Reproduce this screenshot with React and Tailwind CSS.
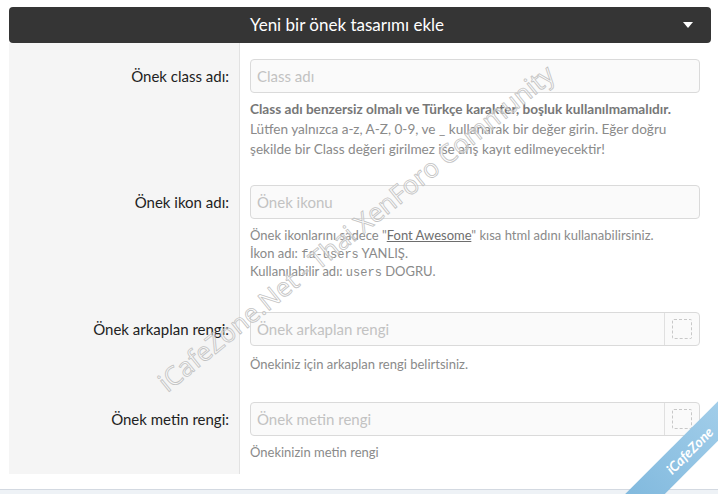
import { useState } from "react";

// ─────────────────────────────────────────────
// Small building blocks
// ─────────────────────────────────────────────
function TextBox({ placeholder, color = false }) {
  return (
    <div className="flex h-[34px] w-full rounded-[4px] border border-[#dadada] bg-[#fafafa] overflow-hidden">
      <input
        type="text"
        placeholder={placeholder}
        className="flex-1 min-w-0 bg-transparent px-[6px] text-[15px] text-[#333] placeholder:text-[#c2c2c2] outline-none font-['Lato',sans-serif]"
      />
      {color && (
        <div className="w-[35px] shrink-0 border-l border-[#e0e0e0] flex items-center justify-center">
          <span className="block w-[20px] h-[20px] rounded-[2px] border border-dashed border-[#c8c8c8]" />
        </div>
      )}
    </div>
  );
}

function Row({ label, top = "pt-4", bottom = "pb-4", children }) {
  return (
    <div className="grid grid-cols-[231px_1fr]">
      <div className={`bg-[#f5f5f5] border-r border-[#e2e2e2] pr-[10px] ${top} ${bottom}`}>
        <div className="h-[34px] flex items-center justify-end text-[15px] text-[#222] font-['Lato',sans-serif]">
          {label}
        </div>
      </div>
      <div className={`pl-[10px] pr-[11px] ${top} ${bottom}`}>{children}</div>
    </div>
  );
}

// ─────────────────────────────────────────────
// App
// ─────────────────────────────────────────────
export default function App() {
  const [open, setOpen] = useState(true);

  return (
    <div className="relative w-[718px] h-[494px] bg-white overflow-hidden font-['Lato',sans-serif]">
      <div className="pl-[9px] pr-[7px] pt-[7px]">
        {/* Header bar */}
        <button
          onClick={() => setOpen(!open)}
          className="relative w-full h-[36px] rounded-[4px] bg-[#353535] text-white text-[17px] pr-[26px] text-center"
        >
          Yeni bir önek tasarımı ekle
          <span className="absolute right-[18px] top-[15px] w-0 h-0 border-l-[5px] border-r-[5px] border-t-[6px] border-l-transparent border-r-transparent border-t-white" />
        </button>

        {/* Form rows */}
        {open && (
          <div>
            <Row label="Önek class adı:" top="pt-4" bottom="pb-[10px]">
              <TextBox placeholder="Class adı" />
              <div className="mt-[6px] text-[13.6px] leading-5 text-[#8a8a8a]">
                <div className="font-bold text-[#777]">
                  Class adı benzersiz olmalı ve Türkçe karakter, boşluk kullanılmamalıdır.
                </div>
                Lütfen yalnızca a-z, A-Z, 0-9, ve _ kullanarak bir değer girin. Eğer doğru şekilde bir Class değeri girilmez ise afiş kayıt edilmeyecektir!
              </div>
            </Row>

            <Row label="Önek ikon adı:" top="pt-4" bottom="pb-4">
              <TextBox placeholder="Önek ikonu" />
              <div className="mt-[7px] text-[13px] leading-[18px] text-[#8a8a8a]">
                Önek ikonlarını sadece "<span className="underline text-[#6e6e6e]">Font Awesome</span>" kısa html adını kullanabilirsiniz.
                <br />
                İkon adı: <code className="font-['Liberation_Mono',monospace] text-[12px] leading-none">fa-users</code> YANLIŞ.
                <br />
                Kullanılabilir adı: <code className="font-['Liberation_Mono',monospace] text-[12px] leading-none">users</code> DOGRU.
              </div>
            </Row>

            <Row label="Önek arkaplan rengi:" top="pt-4" bottom="pb-[13px]">
              <TextBox placeholder="Önek arkaplan rengi" color />
              <div className="mt-[9px] text-[13px] leading-[18px] text-[#8a8a8a]">
                Önekiniz için arkaplan rengi belirtsiniz.
              </div>
            </Row>

            <Row label="Önek metin rengi:" top="pt-4" bottom="pb-[13px]">
              <TextBox placeholder="Önek metin rengi" color />
              <div className="mt-[7px] text-[13px] leading-[18px] text-[#8a8a8a]">
                Önekinizin metin rengi
              </div>
            </Row>
          </div>
        )}
      </div>

      {/* Footer strip */}
      <div className="absolute left-0 right-0 top-[489px] h-[5px] border-t border-[#d3d9e1] bg-[#eef2f6]" />

      {/* Watermark */}
      <div className="pointer-events-none absolute left-[356px] top-[228px] -translate-x-1/2 -translate-y-1/2 -rotate-[39deg] whitespace-nowrap text-[26px] font-['Open_Sans',sans-serif] text-white/40 [-webkit-text-stroke:0.8px_#c2c2c2]">
        iCafeZone.Net - Thai XenForo Community
      </div>

      {/* Corner ribbon */}
      <div className="pointer-events-none absolute left-[604px] top-[436px] w-[170px] h-[28px] -rotate-45 bg-gradient-to-r from-[#7fb8dd] to-[#a9d2ec] flex items-center justify-center text-white text-[14px] font-bold italic">
        iCafeZone
      </div>
    </div>
  );
}
